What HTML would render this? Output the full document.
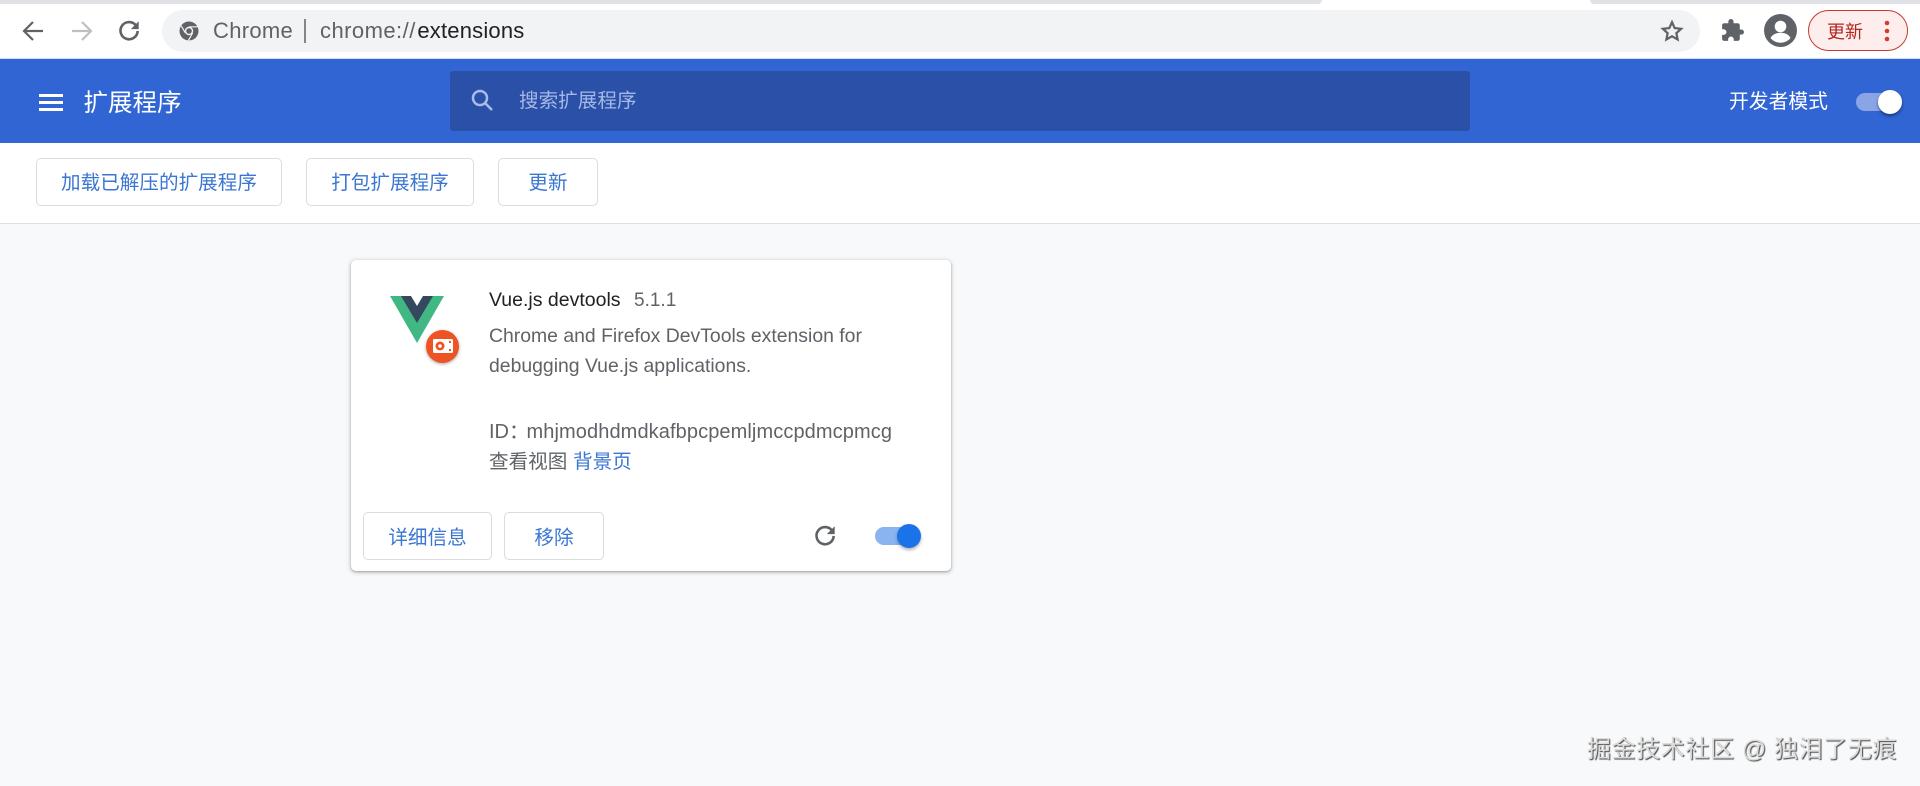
<!DOCTYPE html>
<html lang="zh">
<head>
<meta charset="utf-8">
<title>扩展程序</title>
<style>
html,body{margin:0;padding:0;width:1920px;height:786px;overflow:hidden;background:#f8f9fa}
body{position:relative;font-family:"Liberation Sans","Noto Sans CJK SC",sans-serif}
.a{position:absolute;white-space:nowrap}
.btn{position:absolute;box-sizing:border-box;background:#fff;border:1px solid #dadce0;border-radius:5px;color:#3a76d2;font-size:19.6px;display:flex;align-items:center;justify-content:center;padding-bottom:3px}
svg{position:absolute;display:block}
</style>
</head>
<body>
<!-- toolbar -->
<div class="a" style="left:0;top:0;width:1920px;height:58px;background:#fff"></div>
<div class="a" style="left:0;top:0;width:1322px;height:4px;background:#dfe1e5;border-radius:0 0 8px 0"></div>
<div class="a" style="left:1590px;top:0;width:330px;height:4px;background:#dfe1e5;border-radius:0 0 0 8px"></div>
<div class="a" style="left:0;top:58px;width:1920px;height:1px;background:#cfdcf2"></div>

<svg style="left:20px;top:18px" width="26" height="26" viewBox="0 0 26 26" fill="none" stroke="#5f6368" stroke-width="2.2"><path d="M23 13H4M13 4l-9 9 9 9"/></svg>
<svg style="left:69px;top:18px" width="26" height="26" viewBox="0 0 26 26" fill="none" stroke="#bdbfc2" stroke-width="2.2"><path d="M3 13h19M13 4l9 9-9 9"/></svg>
<svg style="left:117px;top:18px" width="24" height="24" viewBox="0 0 26 26" fill="none"><path d="M20.600 8.200A9.300 9.300 0 1 0 22.400 14" stroke="#5f6368" stroke-width="2.800"/><path d="M23.500 3.500v8.500h-8.500z" fill="#5f6368"/></svg>

<div class="a" style="left:162px;top:10px;width:1538px;height:42px;background:#f1f3f4;border-radius:21px"></div>
<svg style="left:179px;top:21px" width="20" height="20" viewBox="0 0 20 20"><circle cx="10" cy="10" r="9.500" fill="#5f6368"/><circle cx="10" cy="10" r="4.200" fill="#f1f3f4"/><circle cx="10" cy="10" r="2.800" fill="#5f6368"/><path d="M10 5.800h8.500M6.400 12 2.200 4.800M13.600 12l-4.200 7.400" stroke="#f1f3f4" stroke-width="1.200"/></svg>
<div class="a" style="left:213px;top:16px;font-size:22px;line-height:30px;color:#5f6368;letter-spacing:.3px">Chrome</div>
<div class="a" style="left:304px;top:19px;width:2px;height:24px;background:#80868b"></div>
<div class="a" style="left:320px;top:16px;font-size:22px;line-height:30px;color:#5f6368;letter-spacing:.45px">chrome:/<span style="letter-spacing:2px">/</span><span style="color:#202124;letter-spacing:.2px">extensions</span></div>
<svg style="left:1660px;top:19px" width="24" height="24" viewBox="0 0 26 26" fill="none" stroke="#5f6368" stroke-width="2.400"><path d="M13 3.400l2.900 6.400 7 .8-5.200 4.700 1.400 6.900-6.100-3.500-6.100 3.500 1.400-6.900-5.200-4.700 7-.8z"/></svg>
<svg style="left:1720px;top:18px" width="25" height="25" viewBox="0 0 24 24" fill="#5f6368"><path d="M20.500 11H19V7a2 2 0 0 0-2-2h-4V3.500a2.500 2.500 0 0 0-5 0V5H4a2 2 0 0 0-2 2v3.800h1.500a2.700 2.700 0 0 1 0 5.400H2V20a2 2 0 0 0 2 2h3.800v-1.500a2.700 2.700 0 0 1 5.400 0V22H17a2 2 0 0 0 2-2v-4h1.500a2.500 2.500 0 0 0 0-5z"/></svg>
<svg style="left:1764px;top:14px" width="33" height="33" viewBox="0 0 33 33"><circle cx="16.500" cy="16.500" r="16.500" fill="#5f6368"/><circle cx="16.500" cy="12.500" r="5.800" fill="#fff"/><path d="M6.500 24c2-3.800 6-5.200 10-5.200s8 1.400 10 5.200c-2.400 3-6 4.700-10 4.700s-7.600-1.700-10-4.700z" fill="#fff"/></svg>
<div class="a" style="left:1808px;top:10px;width:100px;height:41px;box-sizing:border-box;border:1.500px solid #c5392f;border-radius:21px;background:#fdeeed"></div>
<div class="a" style="left:1827px;top:19px;font-size:18px;line-height:26px;color:#b3261e">更新</div>
<svg style="left:1882px;top:18px" width="10" height="26" viewBox="0 0 10 26" fill="#d33b30"><circle cx="5" cy="5" r="2.300"/><circle cx="5" cy="13" r="2.300"/><circle cx="5" cy="21" r="2.300"/></svg>

<!-- blue header -->
<div class="a" style="left:0;top:59px;width:1920px;height:84px;background:#3065d3"></div>
<div class="a" style="left:39px;top:94px;width:24px;height:3px;background:#fff"></div>
<div class="a" style="left:39px;top:101px;width:24px;height:3px;background:#fff"></div>
<div class="a" style="left:39px;top:108px;width:24px;height:3px;background:#fff"></div>
<div class="a" style="left:83.500px;top:87px;font-size:24.500px;line-height:34px;color:#fff">扩展程序</div>
<div class="a" style="left:450px;top:71px;width:1020px;height:60px;background:#2b50a8;border-radius:3px"></div>
<svg style="left:469px;top:87px" width="26" height="26" viewBox="0 0 26 26" fill="none" stroke="#a9bce8" stroke-width="2.500"><circle cx="11" cy="11" r="7"/><path d="M16 16l7 7"/></svg>
<div class="a" style="left:519px;top:87px;font-size:19.600px;line-height:28px;color:#a6b8e6">搜索扩展程序</div>
<div class="a" style="left:1729px;top:88px;font-size:19.800px;line-height:28px;color:#fff">开发者模式</div>
<div class="a" style="left:1856px;top:93px;width:42px;height:18px;border-radius:9px;background:#8aa5e6"></div>
<div class="a" style="left:1878px;top:90px;width:24px;height:24px;border-radius:50%;background:#fff;box-shadow:0 2px 3px rgba(0,0,30,.45)"></div>

<!-- subbar -->
<div class="a" style="left:0;top:143px;width:1920px;height:80px;background:#fff;border-bottom:1px solid #dedfe1"></div>
<div class="btn" style="left:36px;top:158px;width:246px;height:48px">加载已解压的扩展程序</div>
<div class="btn" style="left:306px;top:158px;width:168px;height:48px">打包扩展程序</div>
<div class="btn" style="left:498px;top:158px;width:100px;height:48px">更新</div>

<!-- card -->
<div class="a" style="left:351px;top:260px;width:600px;height:311px;background:#fff;border-radius:5px;box-shadow:0 1px 2px rgba(60,64,67,.35),0 1px 4px 1px rgba(60,64,67,.18)"></div>
<svg style="left:390px;top:296px" width="54" height="47" viewBox="0 0 54 47"><path d="M0 0h54L27 47z" fill="#41b883"/><path d="M11 0h32L27 27z" fill="#35495e"/><path d="M21 0h12L27 10z" fill="#fff"/></svg>
<div class="a" style="left:425.500px;top:329.500px;width:33px;height:33px;border-radius:50%;background:#ee5423;box-shadow:0 1px 3px rgba(0,0,0,.35)"></div>
<svg style="left:433px;top:339px" width="20" height="14" viewBox="0 0 20 14"><rect x="0" y="0" width="20" height="14" rx="1.500" fill="#fff"/><circle cx="7" cy="7" r="4.500" fill="#ee5423"/><circle cx="7" cy="7" r="1.800" fill="#fff"/><rect x="16" y="2" width="2" height="2" fill="#ee5423"/><rect x="16" y="10" width="2" height="2" fill="#ee5423"/></svg>

<div class="a" style="left:489px;top:287px;font-size:19.500px;line-height:26px;color:#202124">Vue.js devtools</div>
<div class="a" style="left:634px;top:288px;font-size:19px;line-height:26px;color:#5f6368">5.1.1</div>
<div class="a" style="left:489px;top:321px;font-size:19.400px;line-height:30px;color:#5f6368">Chrome and Firefox DevTools extension for</div>
<div class="a" style="left:489px;top:351px;font-size:19.400px;line-height:30px;color:#5f6368">debugging Vue.js applications.</div>
<div class="a" style="left:489px;top:417px;font-size:20px;line-height:30px;color:#5f6368">ID：<span style="letter-spacing:.1px;margin-left:-2.500px">mhjmodhdmdkafbpcpemljmccpdmcpmcg</span></div>
<div class="a" style="left:489px;top:448px;font-size:19.600px;line-height:28px;color:#5f6368">查看视图</div>
<div class="a" style="left:573px;top:448px;font-size:19.600px;line-height:28px;color:#3a76d2">背景页</div>

<div class="btn" style="left:363px;top:512px;width:129px;height:48px;padding-bottom:1px">详细信息</div>
<div class="btn" style="left:504px;top:512px;width:100px;height:48px;padding-bottom:1px">移除</div>
<svg style="left:813px;top:523px" width="24" height="24" viewBox="0 0 26 26" fill="none"><path d="M20.600 8.200A9.300 9.300 0 1 0 22.400 14" stroke="#5f6368" stroke-width="2.800"/><path d="M23.500 3.500v8.500h-8.500z" fill="#5f6368"/></svg>
<div class="a" style="left:875px;top:527px;width:40px;height:18px;border-radius:9px;background:#8ab4f0"></div>
<div class="a" style="left:897px;top:524px;width:24px;height:24px;border-radius:50%;background:#1a73e8;box-shadow:0 2px 3px rgba(0,0,0,.3)"></div>

<!-- watermark -->
<div class="a" style="left:1587px;top:734px;font-size:24px;line-height:32px;color:#dcdcdc;text-shadow:1px 1px 1px #444;letter-spacing:.6px">掘金技术社区 @ 独泪了无痕</div>
</body>
</html>
